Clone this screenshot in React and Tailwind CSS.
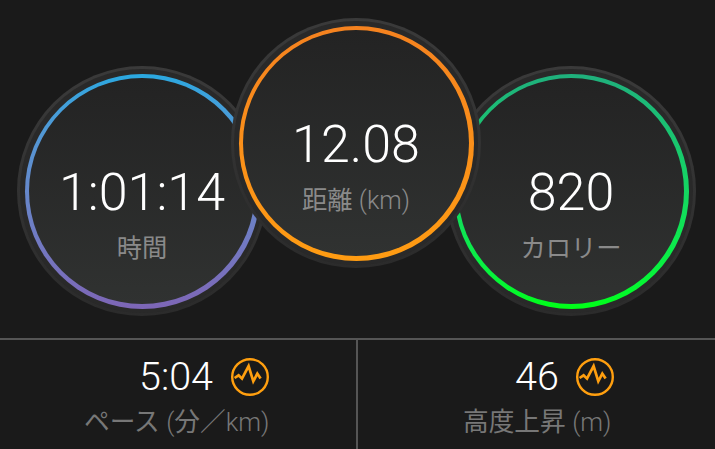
const sans = "font-['Roboto','Noto_Sans_CJK_JP',sans-serif]";

const Gauge = ({ value, label, ring, className = "" }) => (
  <div className={`w-[250px] h-[250px] shrink-0 rounded-full p-[3px] bg-linear-to-b from-[#3a3a3a] to-[#2b2b2b] ${className}`}>
    <div className="w-full h-full rounded-full p-[4.5px] bg-[#292929]">
      <div className={`w-full h-full rounded-full p-[4.5px] ${ring}`}>
        <div className="w-full h-full rounded-full bg-linear-to-b from-[#232323] to-[#303231] flex flex-col items-center pt-[84.5px]">
          <div className="text-[52px] leading-[60px] font-light text-white">{value}</div>
          <div className="mt-[10.5px] text-[25.3px] leading-[32px] text-[#8a8a8a] whitespace-nowrap">{label}</div>
        </div>
      </div>
    </div>
  </div>
);

const PeakIcon = () => (
  <svg width="40" height="40" viewBox="0 0 40 40" fill="none" stroke="#ff9f0f" className="shrink-0">
    <circle cx="20" cy="20" r="17.8" strokeWidth="2.4" />
    <polyline points="4.6,21 8.6,18.3 12,21.6 18.6,9 23.3,24.3 27.3,16.6 30.6,21.6" strokeWidth="2.7" />
  </svg>
);

const Stat = ({ value, label, className = "", rowClass = "", valueClass = "" }) => (
  <div className={`flex flex-col pt-[17px] ${className}`}>
    <div className={`flex items-center h-[40px] ${rowClass}`}>
      <span className={`text-[39.5px] leading-[40px] font-light text-white ${valueClass}`}>{value}</span>
      <PeakIcon />
    </div>
    <div className="mt-[9px] text-[25.7px] leading-[32px] text-[#777777] whitespace-nowrap">{label}</div>
  </div>
);

export default function App() {
  return (
    <div className={`w-[715px] h-[449px] overflow-hidden bg-[#1a1a1a] flex flex-col ${sans}`}>
      <div className="h-[338px] flex items-start pt-[18px] pl-[17px]">
        <Gauge
          value="1:01:14"
          label="時間"
          ring="bg-linear-to-b from-[#29a8e0] to-[#7d66b6]"
          className="mt-[48px]"
        />
        <Gauge
          value="12.08"
          label={<>距離 <span className="font-light">(km)</span></>}
          ring="bg-linear-to-b from-[#f5821f] to-[#ff9c12]"
          className="-ml-[36px] relative z-10"
        />
        <Gauge
          value="820"
          label="カロリー"
          ring="bg-linear-to-b from-[#1fb07c] to-[#00ff14]"
          className="-ml-[35px] mt-[48px]"
        />
      </div>
      <div className="flex-1 flex border-t-2 border-[#555555]">
        <Stat
          value="5:04"
          label={<>ペース <span className="font-light">(</span>分／<span className="font-light">km)</span></>}
          className="w-[356px] pl-[84px]"
          rowClass="pl-[55px]"
          valueClass="mr-[17px]"
        />
        <div className="w-[2px] bg-[#555555]" />
        <Stat
          value="46"
          label={<>高度上昇 <span className="font-light">(m)</span></>}
          className="flex-1 pl-[105px]"
          rowClass="pl-[52px]"
          valueClass="mr-[16px]"
        />
      </div>
    </div>
  );
}
